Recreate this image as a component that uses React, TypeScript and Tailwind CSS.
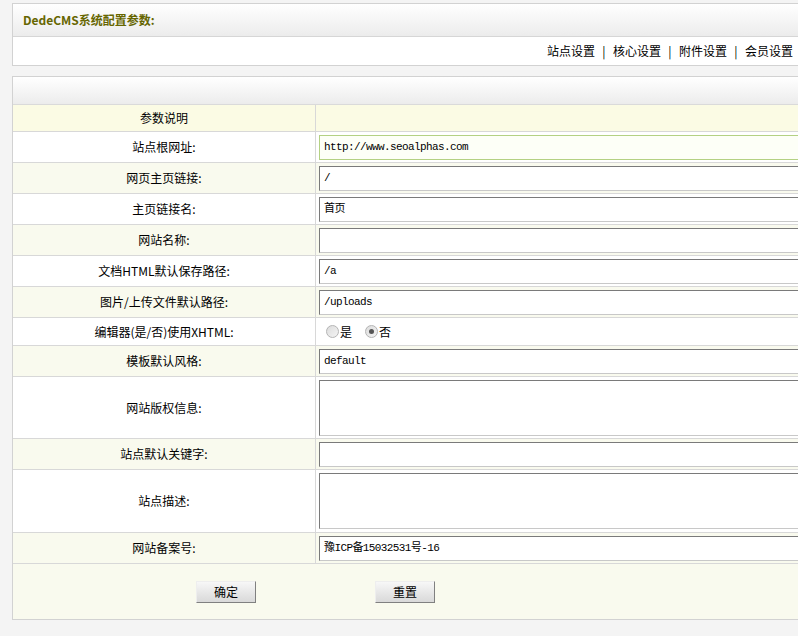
import React from "react";

type Row = {
	label: string;
	kind: "input" | "textarea" | "radio";
	value?: string;
	focus?: boolean;
	h: string;
};

const rows: Row[] = [
	{ label: "站点根网址:", kind: "input", value: "http://www.seoalphas.com", focus: true, h: "h-[31px]" },
	{ label: "网页主页链接:", kind: "input", value: "/", h: "h-[31px]" },
	{ label: "主页链接名:", kind: "input", value: "首页", h: "h-[31px]" },
	{ label: "网站名称:", kind: "input", value: "", h: "h-[31px]" },
	{ label: "文档HTML默认保存路径:", kind: "input", value: "/a", h: "h-[31px]" },
	{ label: "图片/上传文件默认路径:", kind: "input", value: "/uploads", h: "h-[31px]" },
	{ label: "编辑器(是/否)使用XHTML:", kind: "radio", h: "h-[28px]" },
	{ label: "模板默认风格:", kind: "input", value: "default", h: "h-[31px]" },
	{ label: "网站版权信息:", kind: "textarea", h: "h-[62px]" },
	{ label: "站点默认关键字:", kind: "input", value: "", h: "h-[31px]" },
	{ label: "站点描述:", kind: "textarea", h: "h-[63px]" },
	{ label: "网站备案号:", kind: "input", value: "豫ICP备15032531号-16", h: "h-[31px]" },
];

const navItems = ["站点设置", "核心设置", "附件设置", "会员设置"];

// old XP style radio, drawn with spans
const Radio = ({ checked }: { checked?: boolean }) => (
	<span className="w-[13px] h-[13px] rounded-full border border-[#b4b4b4] bg-gradient-to-br from-[#dcdcdc] to-[#f4f4f4] flex items-center justify-center">
		{checked && <span className="w-[5px] h-[5px] rounded-full bg-[#555]" />}
	</span>
);

const OldButton = ({ children }: { children: React.ReactNode }) => (
	<button className="w-[60px] h-[22px] text-[12px] text-black bg-gradient-to-b from-[#f7f7f7] to-[#d9d9d9] border border-t-[#eeeeee] border-l-[#eeeeee] border-r-[#808080] border-b-[#808080] flex items-center justify-center">
		{children}
	</button>
);

const ValueField = ({ row }: { row: Row }) => {
	if (row.kind === "radio") {
		return (
			<div className="flex items-center pl-[7px] text-[12px] text-black">
				<Radio />
				<span className="ml-[1px]">是</span>
				<span className="ml-[13px]">
					<Radio checked />
				</span>
				<span className="ml-[1px]">否</span>
			</div>
		);
	}
	if (row.kind === "textarea") {
		return <div className="h-[56px] w-full bg-white border border-t-[#7a7a7a] border-l-[#7a7a7a] border-b-[#c8c8c8] border-r-[#c8c8c8]" />;
	}
	return (
		<div
			className={
				row.focus
					? "h-[25px] w-full bg-[#fdfff7] border border-[#b4d183] flex items-center pl-[4px] font-['Liberation_Mono','Noto_Sans_CJK_SC',monospace] text-[11px] tracking-[-0.6px] text-black"
					: "h-[25px] w-full bg-white border border-t-[#7a7a7a] border-l-[#7a7a7a] border-b-[#c8c8c8] border-r-[#c8c8c8] flex items-center pl-[4px] font-['Liberation_Mono','Noto_Sans_CJK_SC',monospace] text-[11px] tracking-[-0.6px] text-black"
			}
		>
			{row.value}
		</div>
	);
};

export default function App() {
	return (
		<div className="min-h-[636px] bg-[#f4f4f4] overflow-hidden font-['Noto_Sans_CJK_SC',sans-serif] text-[12px] text-black">
			<div className="ml-[12px] mr-[-12px] pt-[3px]">
				{/* Top panel: title + nav */}
				<div className="border border-[#d2d2d2] bg-white">
					<div className="h-[33px] border-b border-[#d6d6d6] bg-gradient-to-b from-white to-[#ececec] flex items-center pl-[10px]">
						<span className="font-bold text-[#666600] text-[12px]">DedeCMS系统配置参数:</span>
					</div>
					<div className="h-[28px] flex items-center justify-end pr-[16px]">
						{navItems.map((item, i) => (
							<React.Fragment key={item}>
								{i > 0 && <span className="w-[18px] text-center">|</span>}
								<span>{item}</span>
							</React.Fragment>
						))}
					</div>
				</div>

				{/* Config table */}
				<div className="mt-[10px] border border-[#d2d2d2] bg-white">
					<div className="h-[28px] border-b border-[#dadada] bg-gradient-to-b from-white to-[#ececec]" />
					<div className="h-[27px] flex border-b border-[#d8d8d8] bg-[#fbfbe4]">
						<div className="w-[303px] border-r border-[#d8d8d8] flex items-center justify-center">参数说明</div>
						<div className="flex-1" />
					</div>
					{rows.map((row, i) => (
						<div key={row.label} className={`${row.h} flex border-b border-[#d8d8d8] ${i % 2 === 1 ? "bg-[#f9faee]" : "bg-white"}`}>
							<div className="w-[303px] border-r border-[#d8d8d8] flex items-center justify-center">{row.label}</div>
							<div className="flex-1 flex items-center pl-[3px]">
								<ValueField row={row} />
							</div>
						</div>
					))}
					<div className="h-[55px] flex items-center bg-[#f9faee] pl-[183px]">
						<OldButton>确定</OldButton>
						<div className="ml-[119px]">
							<OldButton>重置</OldButton>
						</div>
					</div>
				</div>
			</div>
		</div>
	);
}
